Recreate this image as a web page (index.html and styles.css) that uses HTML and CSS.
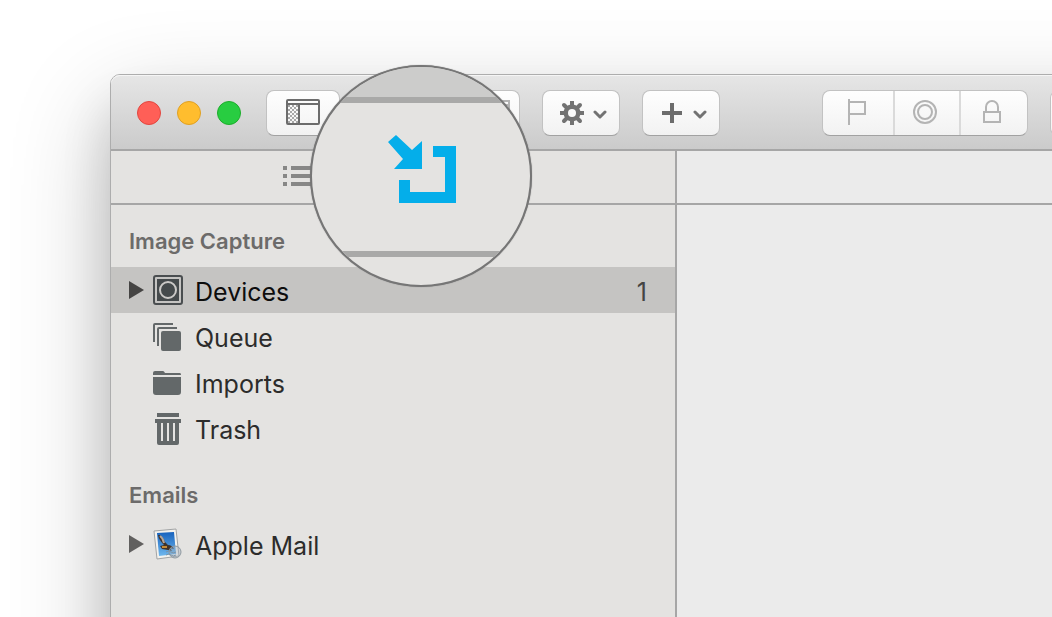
FILE: index.html
```html
<!DOCTYPE html>
<html lang="en">
<head>
<meta charset="utf-8">
<title>Image Capture</title>
<link rel="stylesheet" href="styles.css">
</head>
<body>
<main class="window">
  <header class="toolbar">
    <div class="lights">
      <button class="light light-close" aria-label="Close"></button>
      <button class="light light-min" aria-label="Minimize"></button>
      <button class="light light-full" aria-label="Full screen"></button>
    </div>
    <button class="tool tool-view" aria-label="Toggle sidebar">
      <svg width="34" height="26" viewBox="0 0 34 26" aria-hidden="true">
        <defs>
          <pattern id="checks" width="4" height="4" patternUnits="userSpaceOnUse">
            <rect width="2" height="2" fill="#a8a8a8"/><rect x="2" y="2" width="2" height="2" fill="#a8a8a8"/>
          </pattern>
        </defs>
        <rect x="2" y="6" width="10" height="18" fill="url(#checks)"/>
        <rect x="1" y="1" width="32" height="24" rx="1" fill="none" stroke="#6c6c6c" stroke-width="2"/>
        <path d="M1 5H33M13 5V25" stroke="#6c6c6c" stroke-width="2"/>
      </svg>
    </button>
    <button class="tool tool-layout" aria-label="Layout">
      <svg width="50" height="26" viewBox="0 0 50 26" aria-hidden="true">
        <path d="M1 1H49V25H1ZM1 5H49" fill="none" stroke="#b4b4b4" stroke-width="2"/>
      </svg>
    </button>
    <button class="tool tool-menu" aria-label="Actions">
      <svg width="24" height="24" viewBox="0 0 24 24" aria-hidden="true">
        <g stroke="#727272" stroke-width="4">
          <path d="M12 0V24M0 12H24"/>
          <path d="M4 4L20 20M20 4L4 20" stroke-linecap="round"/>
        </g>
        <circle cx="12" cy="12" r="8.5" fill="#727272"/>
        <circle cx="12" cy="12" r="4" fill="#f9f9f9"/>
      </svg>
      <svg class="down" width="14" height="9" viewBox="0 0 14 9" aria-hidden="true"><path d="M2 2L7 7L12 2" class="chevron"/></svg>
    </button>
    <button class="tool tool-menu" aria-label="Add">
      <svg width="24" height="24" viewBox="0 0 24 24" aria-hidden="true"><path d="M12 2V22M2 12H22" stroke="#6c6c6c" stroke-width="4"/></svg>
      <svg class="down" width="14" height="9" viewBox="0 0 14 9" aria-hidden="true"><path d="M2 2L7 7L12 2" class="chevron"/></svg>
    </button>
    <div class="group">
      <button class="seg seg-flag" aria-label="Flag">
        <svg width="20" height="26" viewBox="0 0 20 26" aria-hidden="true"><path d="M2 0V26M2 3H18V15H2" class="faint"/></svg>
      </button>
      <button class="seg" aria-label="Label">
        <svg width="24" height="24" viewBox="0 0 24 24" aria-hidden="true"><circle cx="12" cy="12" r="11" class="faint"/><circle cx="12" cy="12" r="7" class="faint"/></svg>
      </button>
      <button class="seg seg-lock" aria-label="Lock">
        <svg width="18" height="24" viewBox="0 0 18 24" aria-hidden="true"><path d="M1 12H17V22H1ZM3 12V7A6 6 0 0 1 15 7V12" class="faint"/></svg>
      </button>
    </div>
    <button class="tool tool-next" aria-label="More"></button>
  </header>
  <div class="panes">
    <aside class="sidebar">
      <div class="tabs">
        <button class="tab" aria-label="List">
          <svg width="31" height="20" viewBox="0 0 31 20" aria-hidden="true"><path d="M0 2H4M8 2H31M0 10H4M8 10H31M0 18H4M8 18H31" stroke="#878786" stroke-width="4"/></svg>
        </button>
      </div>
      <nav class="tree">
        <h2 class="heading">Image Capture</h2>
        <a class="row row-active" href="#devices">
          <svg class="arrow" width="15" height="18" viewBox="0 0 15 18" aria-hidden="true"><path d="M0 0L15 9L0 18Z"/></svg>
          <svg class="icon" width="30" height="30" viewBox="0 0 30 30" aria-hidden="true">
            <rect x="1" y="1" width="28" height="28" rx="2" fill="#c5c4c2" stroke="#4a4e50" stroke-width="2"/>
            <rect x="4" y="4" width="22" height="22" fill="#454a4c"/>
            <circle cx="15" cy="15" r="8" fill="#454a4c" stroke="#cbc9c7" stroke-width="2"/>
          </svg>
          <span class="name">Devices</span><span class="count">1</span>
        </a>
        <a class="row" href="#queue">
          <span class="arrow"></span>
          <svg class="icon" width="30" height="30" viewBox="0 0 30 30" aria-hidden="true">
            <path d="M1 21V4Q1 3 2 3H20M5 25V8Q5 7 6 7H24" fill="none" stroke="#636869" stroke-width="2"/>
            <rect x="8" y="10" width="20" height="20" rx="2" fill="#636869"/>
          </svg>
          <span class="name">Queue</span>
        </a>
        <a class="row" href="#imports">
          <span class="arrow"></span>
          <svg class="icon" width="30" height="30" viewBox="0 0 30 30" aria-hidden="true">
            <path d="M0 8V6Q0 4 2 4H10Q11 4 12 6H27Q28 6 28 8ZM0 10H28V25Q28 28 25 28H3Q0 28 0 25Z" fill="#636869"/>
          </svg>
          <span class="name">Imports</span>
        </a>
        <a class="row" href="#trash">
          <span class="arrow"></span>
          <svg class="icon" width="30" height="34" viewBox="0 0 30 34" aria-hidden="true">
            <path d="M4 2H26V6H4ZM2 8H28V12H26V32Q26 34 24 34H6Q4 34 4 32V12H2Z" fill="#636869"/>
            <path d="M9 12V30M15 12V30M21 12V30" stroke="#e4e3e1" stroke-width="2"/>
          </svg>
          <span class="name">Trash</span>
        </a>
        <h2 class="heading heading-next">Emails</h2>
        <a class="row" href="#mail">
          <svg class="arrow" width="15" height="18" viewBox="0 0 15 18" aria-hidden="true"><path d="M0 0L15 9L0 18Z"/></svg>
          <svg class="icon" width="30" height="32" viewBox="0 0 30 32" aria-hidden="true">
            <defs><linearGradient id="sky" x2="0" y2="1"><stop stop-color="#1762bd"/><stop offset="1" stop-color="#6fb8ee"/></linearGradient></defs>
            <path d="M1 3L23 1L26 28L4 31Z" fill="#f3f2ee" stroke="#a2a4a5"/>
            <path d="M4 5L21 4L23 26L6 28Z" fill="url(#sky)"/>
            <path d="M5 7Q9 6 12 14L15 17Q19 17 21 21L17 20L19 23L15 22L9 21L7 18L11 17Q6 12 5 7Z" fill="#40332b"/>
            <path d="M7 8Q10 10 11 15" fill="none" stroke="#b5a79a" stroke-width="2"/>
            <path d="M9 19L14 19" stroke="#c68b36" stroke-width="2"/>
            <circle cx="22" cy="24" r="6" fill="#9fb0bd" fill-opacity=".4" stroke="#8f9aa1"/>
            <path d="M13 24Q16 22 18 24T23 24M13 27Q16 25 18 27T23 27" fill="none" stroke="#7d93a6"/>
          </svg>
          <span class="name">Apple Mail</span>
        </a>
      </nav>
    </aside>
    <section class="content"><div class="content-bar"></div></section>
  </div>
</main>
<div class="lens">
  <div class="lens-top"></div>
  <div class="lens-body">
    <svg width="68" height="68" viewBox="0 0 68 68" aria-hidden="true">
      <path d="M0 7L8 0L24 15L34 6V34H6L15 24ZM45 11H68V68H11V45H22V57H57V22H45Z" fill="#04aeea"/>
    </svg>
  </div>
</div>
</body>
</html>
```
FILE: styles.css
```css
* { box-sizing: border-box; }

body {
  position: relative;
  display: flex;
  min-height: 100vh;
  margin: 0;
  padding: 74px 0 0 110px;
  overflow: hidden;
  background: #fff;
  font-family: Inter, "Liberation Sans", sans-serif;
}

button {
  margin: 0;
  padding: 0;
  border: 0;
  background: none;
  font: inherit;
}

svg { display: block; flex: none; }

.window {
  display: flex;
  flex: 1 0 auto;
  flex-direction: column;
  width: 100%;
  margin-right: -200px;
  margin-bottom: -100px;
  border: 1px solid #adadad;
  border-radius: 10px;
  background: #ebebeb;
  box-shadow: 0 36px 50px rgba(0, 0, 0, 0.14), 0 36px 100px rgba(0, 0, 0, 0.24);
}

.toolbar {
  display: flex;
  align-items: center;
  height: 76px;
  padding: 2px 0 0 26px;
  border-bottom: 2px solid #a6a6a6;
  border-radius: 9px 9px 0 0;
  background: linear-gradient(#e6e6e6, #cbcbcb);
  box-shadow: inset 0 1px #f5f5f5;
}

.lights { display: flex; gap: 16px; margin-right: 25px; }

.light { width: 24px; height: 24px; border-radius: 50%; }
.light-close { border: 1px solid #e2463f; background: #ff5f57; }
.light-min { border: 1px solid #dfa023; background: #ffbd2e; }
.light-full { border: 1px solid #1dad2b; background: #28cd41; }

.tool,
.group {
  display: flex;
  align-items: center;
  justify-content: center;
  height: 46px;
  border: 1px solid #c2c2c2;
  border-bottom-color: #a2a2a2;
  border-radius: 8px;
  background: linear-gradient(#fefefe, #f2f2f2);
}

.tool-view { width: 74px; margin-right: 80px; padding-bottom: 2px; }
.tool-layout { width: 100px; margin-right: 22px; justify-content: flex-end; padding-right: 9px; }
.tool-menu { gap: 9px; width: 78px; margin-right: 22px; padding: 0 0 0 4px; }
.down { margin-top: 3px; }
.tool-next { width: 78px; }

.chevron {
  fill: none;
  stroke: #727272;
  stroke-width: 3;
  stroke-linecap: round;
  stroke-linejoin: round;
}

.group { margin: 0 22px 0 80px; }

.seg {
  display: flex;
  align-items: center;
  justify-content: center;
  width: 66px;
  height: 44px;
  padding: 0 4px 2px 0;
  border-left: 2px solid #dadada;
}

.seg-flag { width: 70px; padding-right: 2px; border-left: 0; }
.seg-lock { width: 68px; }
.faint { fill: none; stroke: #b4b4b4; stroke-width: 2; }

.panes { display: flex; flex: 1; }

.sidebar {
  flex: none;
  width: 566px;
  border-right: 2px solid #a6a6a6;
  background: #e4e3e1;
}

.tabs,
.content-bar {
  height: 54px;
  border-bottom: 2px solid #a6a6a6;
}

.tabs { display: flex; align-items: center; padding-left: 172px; padding-bottom: 2px; }
.content { flex: 1; }

.heading {
  margin: 0;
  padding: 22px 18px 12px;
  color: #6c6b6a;
  font-size: 22px;
  font-weight: 600;
  line-height: 28px;
}

.heading-next { padding-top: 30px; }

.row {
  display: flex;
  align-items: center;
  height: 46px;
  padding: 0 28px 0 18px;
  color: #2c2c2b;
  font-size: 25px;
  line-height: 32px;
  text-decoration: none;
}

.row-active { background: #c5c4c2; color: #0d0d0d; }
.arrow { flex: none; width: 15px; margin-right: 9px; fill: #61605f; }
.row-active .arrow { fill: #454443; }
.icon { margin-right: 12px; }
.name { flex: 1; padding-top: 3px; }
.count { padding-top: 3px; color: #454443; }

.lens {
  position: absolute;
  top: 65px;
  left: 310px;
  width: 222px;
  height: 222px;
  overflow: hidden;
  border: 2px solid #767676;
  border-radius: 50%;
  background: #e4e3e1;
  box-shadow: 0 0 1px #767676;
}

.lens-top { height: 30px; background: #cccccb; }

.lens-body {
  height: 160px;
  padding: 32px 0 0 76px;
  border-top: 6px solid #a9a9a8;
  border-bottom: 6px solid #a9a9a8;
}
```
